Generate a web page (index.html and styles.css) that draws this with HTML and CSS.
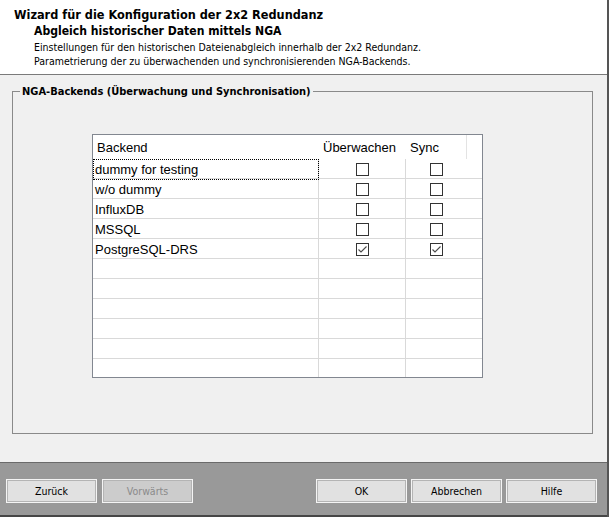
FILE: index.html
```html
<!DOCTYPE html>
<html lang="de">
<head>
<meta charset="utf-8">
<title>Wizard</title>
<link rel="stylesheet" href="styles.css">
</head>
<body>
<div class="window">
  <header class="head">
    <div class="title">Wizard für die Konfiguration der 2x2 Redundanz</div>
    <div class="subtitle">Abgleich historischer Daten mittels NGA</div>
    <div class="desc">Einstellungen für den historischen Dateienabgleich innerhalb der 2x2 Redundanz.<br>Parametrierung der zu überwachenden und synchronisierenden NGA-Backends.</div>
  </header>
  <main class="content">
    <fieldset class="group">
      <legend class="legend">NGA-Backends (Überwachung und Synchronisation)</legend>
      <div class="grid">
        <div class="row hdr">
          <div class="cell c1">Backend</div>
          <div class="cell c2">Überwachen</div>
          <div class="cell c3">Sync</div>
          <div class="cell c4"></div>
        </div>
        <div class="row">
          <div class="cell c1 focus">dummy for testing</div>
          <div class="cell c2"><span class="cb"></span></div>
          <div class="cell c3"><span class="cb"></span></div>
          <div class="cell c4"></div>
        </div>
        <div class="row">
          <div class="cell c1">w/o dummy</div>
          <div class="cell c2"><span class="cb"></span></div>
          <div class="cell c3"><span class="cb"></span></div>
          <div class="cell c4"></div>
        </div>
        <div class="row">
          <div class="cell c1">InfluxDB</div>
          <div class="cell c2"><span class="cb"></span></div>
          <div class="cell c3"><span class="cb"></span></div>
          <div class="cell c4"></div>
        </div>
        <div class="row">
          <div class="cell c1">MSSQL</div>
          <div class="cell c2"><span class="cb"></span></div>
          <div class="cell c3"><span class="cb"></span></div>
          <div class="cell c4"></div>
        </div>
        <div class="row">
          <div class="cell c1">PostgreSQL-DRS</div>
          <div class="cell c2"><span class="cb"><svg class="tick" viewBox="0 0 11 11" width="11" height="11"><polyline points="1.5,5.5 4,8 9.5,2.5" fill="none" stroke="#4a4a4a" stroke-width="1.1"/></svg></span></div>
          <div class="cell c3"><span class="cb"><svg class="tick" viewBox="0 0 11 11" width="11" height="11"><polyline points="1.5,5.5 4,8 9.5,2.5" fill="none" stroke="#4a4a4a" stroke-width="1.1"/></svg></span></div>
          <div class="cell c4"></div>
        </div>
        <div class="row"><div class="cell c1"></div><div class="cell c2"></div><div class="cell c3"></div><div class="cell c4"></div></div>
        <div class="row"><div class="cell c1"></div><div class="cell c2"></div><div class="cell c3"></div><div class="cell c4"></div></div>
        <div class="row"><div class="cell c1"></div><div class="cell c2"></div><div class="cell c3"></div><div class="cell c4"></div></div>
        <div class="row"><div class="cell c1"></div><div class="cell c2"></div><div class="cell c3"></div><div class="cell c4"></div></div>
        <div class="row"><div class="cell c1"></div><div class="cell c2"></div><div class="cell c3"></div><div class="cell c4"></div></div>
        <div class="row last"><div class="cell c1"></div><div class="cell c2"></div><div class="cell c3"></div><div class="cell c4"></div></div>
      </div>
    </fieldset>
  </main>
  <footer class="foot">
    <div class="btns left">
      <div class="btn">Zurück</div>
      <div class="btn disabled">Vorwärts</div>
    </div>
    <div class="btns right">
      <div class="btn">OK</div>
      <div class="btn">Abbrechen</div>
      <div class="btn">Hilfe</div>
    </div>
  </footer>
</div>
</body>
</html>
```
FILE: styles.css
```css
html, body {
  margin: 0;
  padding: 0;
}
body {
  width: 609px;
  height: 517px;
  overflow: hidden;
  background: #f0f0f0;
  font-family: "DejaVu Sans Condensed", "DejaVu Sans", sans-serif;
  color: #000;
}
.window {
  width: 609px;
  height: 517px;
  box-sizing: border-box;
  border-right: 2px solid #555;
  display: flex;
  flex-direction: column;
}
.head {
  height: 75px;
  box-sizing: border-box;
  background: #fff;
  border-bottom: 1px solid #7a7a7a;
  padding: 7px 0 0 14px;
}
.title {
  font-weight: bold;
  font-size: 12.6px;
  line-height: 15px;
  white-space: nowrap;
}
.subtitle {
  font-weight: bold;
  font-size: 12.1px;
  line-height: 15px;
  margin: 2px 0 0 20px;
  white-space: nowrap;
}
.desc {
  font-size: 10.5px;
  line-height: 14px;
  margin: 1px 0 0 20px;
  white-space: nowrap;
}
.content {
  flex: 1;
  background: #f0f0f0;
  display: flex;
  flex-direction: column;
}
.group {
  box-sizing: border-box;
  height: 349px;
  margin: 10px 14px 0 12px;
  padding: 0;
  border: 1px solid #8a8a8a;
  min-width: 0;
}
.legend {
  font-weight: bold;
  font-size: 11px;
  line-height: 13px;
  padding: 0 2px;
  margin-left: 7px;
  white-space: nowrap;
}
.grid {
  width: 391px;
  box-sizing: border-box;
  margin: 36px 0 0 79px;
  border: 1px solid #828790;
  background: #fff;
  font-family: "Liberation Sans", Arial, sans-serif;
  font-size: 13px;
}
.row {
  display: grid;
  grid-template-columns: 226px 87px 61px 15px;
  height: 20px;
  box-sizing: border-box;
  border-bottom: 1px solid #d9d9d9;
}
.row.hdr {
  height: 24px;
  border-bottom: none;
}
.row.last {
  height: 18px;
  border-bottom: none;
}
.cell {
  box-sizing: border-box;
  display: flex;
  align-items: center;
  min-width: 0;
  white-space: nowrap;
  line-height: 19px;
}
.row .c1 {
  padding: 1px 0 0 2px;
  border-right: 1px solid #d9d9d9;
}
.row .c2 {
  justify-content: center;
  border-right: 1px solid #d9d9d9;
}
.row .c3 {
  justify-content: center;
}
.row.hdr .cell {
  justify-content: flex-start;
  padding: 0 0 0 4px;
  border-right: none;
}
.row.hdr .c3 {
  border-right: 1px solid #e3e3e3;
}
.focus {
  position: relative;
}
.focus::after {
  content: "";
  position: absolute;
  top: 0;
  left: 0;
  right: -1px;
  bottom: -1px;
  border: 1px dotted #000;
}
.cb {
  width: 13px;
  height: 13px;
  box-sizing: border-box;
  border: 1px solid #333;
  background: #fff;
  display: flex;
  align-items: center;
  justify-content: center;
}
.tick {
  display: block;
}
.foot {
  height: 55px;
  box-sizing: border-box;
  background: #999;
  border-top: 1px solid #6a6a6a;
  border-bottom: 2px solid #464646;
  padding: 16px 10px 0 6px;
  display: flex;
  justify-content: space-between;
  align-items: flex-start;
}
.btns {
  display: flex;
}
.btns.left {
  gap: 5px;
}
.btns.right {
  gap: 4px;
}
.btn {
  width: 91px;
  height: 24px;
  box-sizing: border-box;
  border: 1px solid #f4f4f4;
  box-shadow: inset 0 0 0 1px #b4b4b4;
  background: #e1e1e1;
  font-size: 10.5px;
  display: flex;
  align-items: center;
  justify-content: center;
  color: #000;
}
.btn.disabled {
  background: #cccccc;
  color: #8a8a8a;
}
```
